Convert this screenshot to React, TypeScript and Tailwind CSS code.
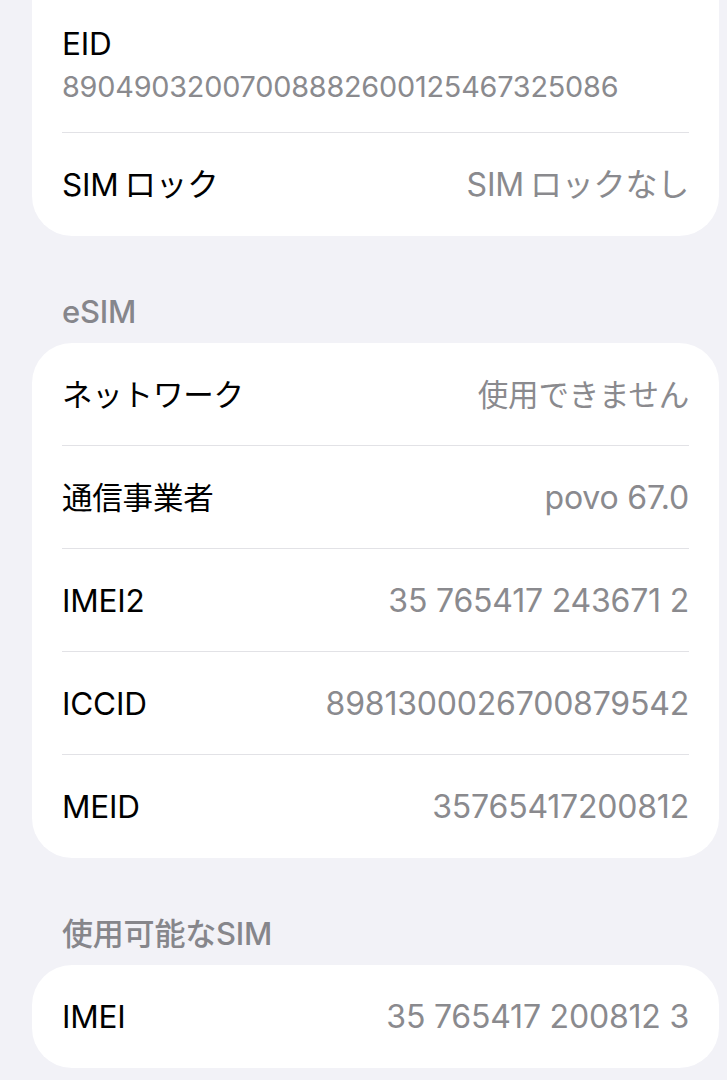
const FONT = "font-['Inter','Noto_Sans_CJK_JP',sans-serif]"

type Row = { label: React.ReactNode; value: React.ReactNode; id: string; ja?: 'label' | 'value' | 'both' }

const esim: Row[] = [
  { id: 'net', label: 'ネットワーク', value: '使用できません', ja: 'both' },
  { id: 'carrier', label: '通信事業者', value: 'povo 67.0', ja: 'label' },
  { id: 'imei2', label: 'IMEI2', value: '35 765417 243671 2' },
  { id: 'iccid', label: 'ICCID', value: '8981300026700879542' },
  { id: 'meid', label: 'MEID', value: '35765417200812' },
]

function InfoRow({ label, value, last, ja }: Omit<Row, 'id'> & { last?: boolean }) {
  // 和文だけの行は少し小さめ（Noto CJK は SF/ヒラギノより幅が広い）
  const jaLabel = ja === 'label' || ja === 'both'
  const jaValue = ja === 'value' || ja === 'both'
  return (
    <div className={`flex h-[103px] items-center justify-between ${last ? '' : 'border-b border-[#e2e2e6]'}`}>
      <span className={`${jaLabel ? 'text-[30.5px]' : 'text-[31.5px]'} text-black`}>{label}</span>
      <span className={`${jaValue ? 'text-[30.5px]' : 'text-[32px]'} text-[#8a8a8e]`}>{value}</span>
    </div>
  )
}

function SectionHeader({ children }: { children: React.ReactNode }) {
  return (
    <div className="mt-[58px] mb-[13px] px-[30px] text-[31px] leading-[36px] font-medium text-[#86868b]">
      {children}
    </div>
  )
}

// "SIM" と "ロック" の間に少し隙間がある
const SimLock = ({ suffix = '' }: { suffix?: string }) => (
  <>SIM<span className="ml-[6px]">ロック{suffix}</span></>
)

export default function App() {
  return (
    <div className={`min-h-screen w-full bg-[#f2f2f7] pl-[32px] pr-[8px] leading-[43px] tracking-[-0.2px] ${FONT}`}>
      {/* SIM カード（上部は画面外） */}
      <div className="rounded-b-[40px] bg-white px-[30px]">
        <div className="border-b border-[#e2e2e6] pt-[22px] pb-[24px]">
          <div className="text-[31.5px] text-black">EID</div>
          <div className="text-[28.8px] text-[#8a8a8e]">89049032007008882600125467325086</div>
        </div>
        <InfoRow label={<SimLock />} value={<SimLock suffix="なし" />} last />
      </div>

      <SectionHeader>eSIM</SectionHeader>
      <div className="rounded-[40px] bg-white px-[30px]">
        {esim.map((r, i) => (
          <InfoRow key={r.id} label={r.label} value={r.value} ja={r.ja} last={i === esim.length - 1} />
        ))}
      </div>

      <SectionHeader>使用可能なSIM</SectionHeader>
      <div className="rounded-[40px] bg-white px-[30px]">
        <InfoRow label="IMEI" value="35 765417 200812 3" last />
      </div>
    </div>
  )
}
